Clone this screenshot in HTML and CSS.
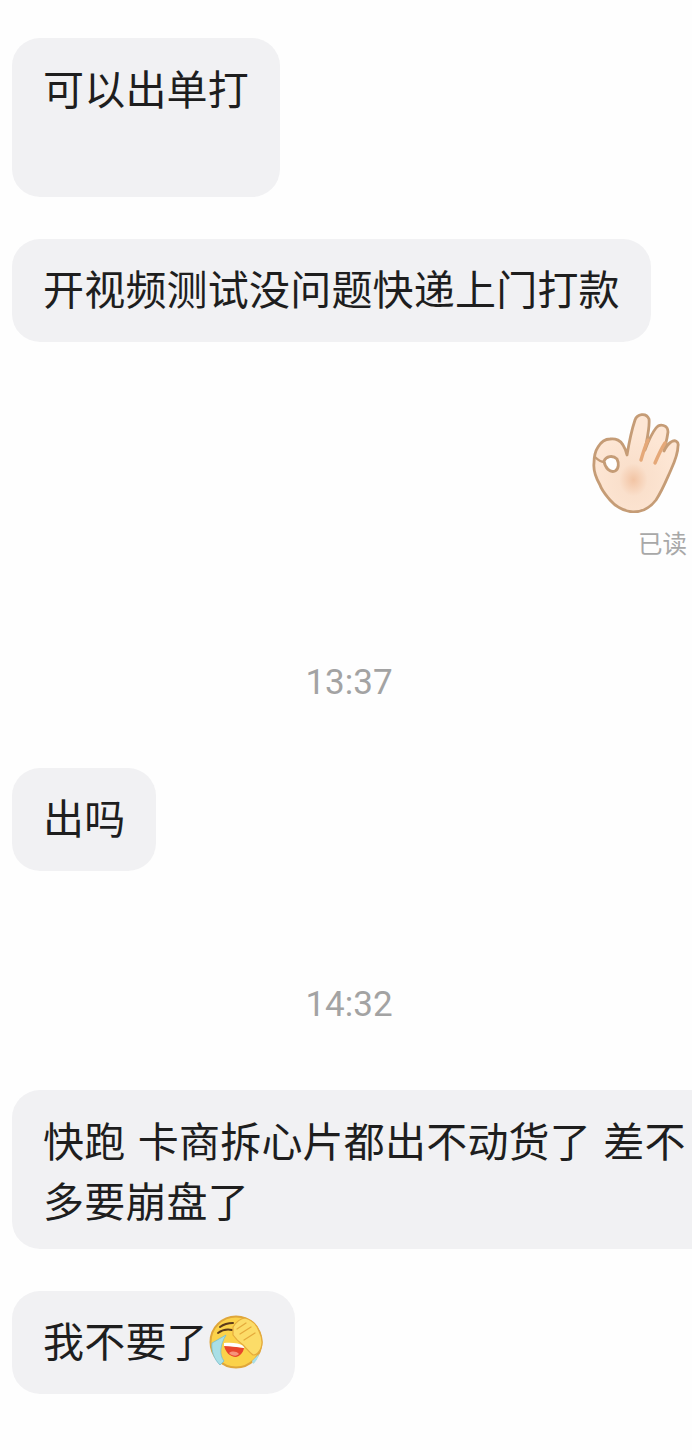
FILE: index.html
```html
<!DOCTYPE html>
<html lang="zh-CN">
<head>
  <meta charset="UTF-8">
  <title>聊天记录</title>
  <meta name="viewport" content="width=device-width, initial-scale=1.0">
  <link rel="stylesheet" href="styles.css">
</head>
<body>
  <div class="chat">
    <div class="bubble first">可以出单打</div>
    <div class="bubble second">开视频测试没问题快递上门打款</div>

    <div class="mine">
      <svg class="ok-hand" viewBox="0 0 90 100" aria-hidden="true">
        <defs>
          <radialGradient id="palm" cx="47%" cy="67%" r="48%">
            <stop offset="0" stop-color="#f2c4a4"/>
            <stop offset="0.35" stop-color="#fae0cc"/>
            <stop offset="1" stop-color="#fde6d4"/>
          </radialGradient>
        </defs>
        <path d="M37 42 C39 30 42 16 45 7 C47 1 56 -1 59 6 C60 14 57 26 55 37 C58 29 62 20 66 15 C70 10 78 12 78 19 C77 27 75 33 74 38 C76 34 78 31 81 29 C85 26 89 29 88 33 C88 42 84 50 80 59 C76 68 72 78 66 87 C60 95 52 99 43 99 C33 98 25 93 20 87 C16 82 12 78 10 72 C6 65 3 58 4 50 C4 42 6 37 8 34 C11 29 15 26 20 26 C26 25 31 28 33 32 C35 35 36 38 37 42 Z" fill="url(#palm)" stroke="#c59c76" stroke-width="2.8" stroke-linejoin="round"/>
        <path d="M51 47 C53 40 55 33 58 27 M65 50 C68 43 71 36 75 30" fill="none" stroke="#e5a878" stroke-width="3.4" stroke-linecap="round"/>
        <path d="M14 48 C16 43 23 42 27 46 C29 50 29 56 25 58 C20 60 15 55 14 48 Z" fill="#fff" stroke="#c59c76" stroke-width="2.8"/>
        <path d="M5 44 C8 47 11 49 14 49" fill="none" stroke="#c59c76" stroke-width="2.4"/>
      </svg>
      <div class="read-mark">已读</div>
    </div>

    <div class="time time-one">13:37</div>
    <div class="bubble third">出吗</div>

    <div class="time time-two">14:32</div>
    <div class="bubble long">快跑 卡商拆心片都出不动货了 差不多要崩盘了</div>

    <div class="bubble last">我不要了<svg class="cry" viewBox="0 0 54 54" aria-hidden="true">
        <circle cx="27" cy="27" r="25.5" fill="#fbd24a" stroke="#dfa63a" stroke-width="2"/>
        <path d="M17 20 L3 28 C2 36 5 44 11 50 L15 46 C10 40 11 30 17 20 Z" fill="#a9dfe6" stroke="#79bccb" stroke-width="0.8"/>
        <path d="M43 46 L50 39 C49 43 47 47 44 49 Z" fill="#a9dfe6"/>
        <path d="M15 30 L35 33 C34 38 31 41 27 42 C21 42 16 37 15 30 Z" fill="#e8452c"/>
        <path d="M15 28 C22 27 30 28 36 31 L35 33 C28 32 21 31 15 31 Z" fill="#fff"/>
        <path d="M20 38 C23 36 27 36 30 39 C27 42 23 41 20 38 Z" fill="#f7937a"/>
        <path d="M11 12 C15 9 20 8 24 8 M9 18 C13 15 18 14 23 15" fill="none" stroke="#5c3a1a" stroke-width="2" stroke-linecap="round"/>
        <path d="M24 12 C27 7 32 3 36 3 C43 5 48 10 50 16 C53 22 54 28 52 33 C50 38 47 40 44 40 C40 37 37 33 34 30 C30 27 26 23 24 20 Z" fill="#fcdc68" stroke="#e5aa3c" stroke-width="1.2"/>
        <path d="M28 14 L37 8 M31 19 L42 12 M35 25 L46 18" fill="none" stroke="#e5aa3c" stroke-width="1.3" stroke-linecap="round"/>
      </svg></div>
  </div>
</body>
</html>
```

FILE: styles.css
```css
* {
  box-sizing: border-box;
}
body {
  margin: 0;
  background: #fefefe;
  overflow: hidden;
  font-family: "Noto Sans CJK SC", "Noto Sans", sans-serif;
}
.chat {
  width: 692px;
  height: 1450px;
  padding: 38px 0 0 12px;
  display: flex;
  flex-direction: column;
  align-items: flex-start;
}
.chat > * {
  flex-shrink: 0;
}
.bubble {
  background: #f1f1f3;
  color: #1e1e1e;
  font-size: 41px;
  letter-spacing: 0.2px;
  line-height: 60px;
  padding: 18px 0 25px 31px;
  border-radius: 28px;
  white-space: nowrap;
}
.first {
  width: 268px;
  height: 159px;
  padding-top: 19px;
}
.second {
  width: 639px;
  margin-top: 42px;
}
.mine {
  align-self: flex-end;
  margin-top: 71px;
  padding-right: 5px;
  display: flex;
  flex-direction: column;
  align-items: flex-end;
}
.ok-hand {
  display: block;
  width: 90px;
  height: 100px;
  margin-right: 7px;
}
.read-mark {
  margin-top: 14px;
  font-size: 24.5px;
  line-height: 32px;
  color: #a8a8a8;
}
.time {
  align-self: stretch;
  margin-left: -12px;
  text-align: center;
  font-family: "Roboto", "Noto Sans", sans-serif;
  font-size: 35px;
  line-height: 44px;
  color: #a3a3a3;
  padding-left: 6px;
}
.time-one {
  margin-top: 102px;
}
.time-two {
  margin-top: 112px;
}
.third {
  width: 144px;
  margin-top: 63px;
}
.long {
  width: 680px;
  margin-top: 63px;
  padding: 19px 0 20px 31px;
  border-radius: 28px 0 0 28px;
  white-space: normal;
  word-spacing: 3px;
}
.last {
  width: 283px;
  margin-top: 42px;
  display: flex;
  align-items: center;
}
.cry {
  display: block;
  width: 54px;
  height: 54px;
  margin-left: 1px;
  margin-top: 6px;
}
```
